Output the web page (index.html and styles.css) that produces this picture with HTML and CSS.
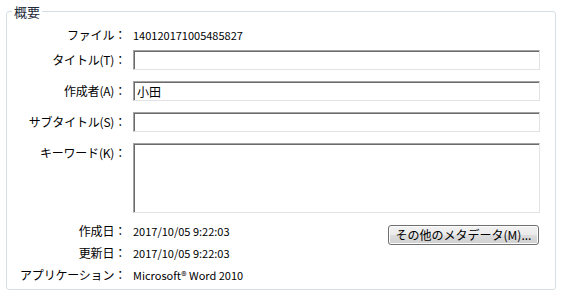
FILE: index.html
```html
<!DOCTYPE html>
<html lang="ja">
<head>
    <meta charset="UTF-8">
    <title>概要</title>
    <link rel="stylesheet" href="styles.css">
</head>
<body>
    <fieldset class="summary">
        <legend>概要</legend>

        <div class="row first">
            <span class="label">ファイル：</span>
            <span class="value">140120171005485827</span>
        </div>
        <div class="row tight">
            <label class="label" for="title">タイトル(T)：</label>
            <input type="text" id="title">
        </div>
        <div class="row">
            <label class="label" for="author">作成者(A)：</label>
            <input type="text" id="author" value="小田">
        </div>
        <div class="row">
            <label class="label" for="subtitle">サブタイトル(S)：</label>
            <input type="text" id="subtitle">
        </div>
        <div class="row top">
            <label class="label" for="keywords">キーワード(K)：</label>
            <textarea id="keywords"></textarea>
        </div>

        <!-- read-only info -->
        <div class="meta">
            <div class="row info">
                <span class="label">作成日：</span>
                <div class="value split">
                    <span>2017/10/05 9:22:03</span>
                    <button class="more">その他のメタデータ(M)...</button>
                </div>
            </div>
            <div class="row info">
                <span class="label">更新日：</span>
                <span class="value">2017/10/05 9:22:03</span>
            </div>
            <div class="row info">
                <span class="label">アプリケーション：</span>
                <span class="value">Microsoft® Word 2010</span>
            </div>
        </div>
    </fieldset>
</body>
</html>
```

FILE: styles.css
```css
* { box-sizing: border-box; }
body { margin: 0; padding-top: 3px; background: #fff; color: #000; font: 11px/20px "Noto Sans CJK JP", "Noto Sans", sans-serif; }

.summary {
    margin: 0 5px 0 6px; width: 550px; padding: 0 15px 3px 0;
    border: 1px solid #d5dfe5; border-radius: 3px;
}
.summary legend { margin-left: 5px; padding: 0 2px; font-size: 13px; line-height: 17px; color: #1e2a3a; }

.row { display: grid; grid-template-columns: 119px 1fr; column-gap: 7px; align-items: center; margin-top: 11px; }
.row.first { margin-top: 5px; }
.row.tight { margin-top: 5px; }
.row.top { align-items: start; }
.label { text-align: right; white-space: nowrap; font-size: 12px; letter-spacing: -0.2px; }

input, textarea {
    display: block; width: 100%; height: 20px; margin: 0; padding: 0 3px;
    font: 12px/17px "Noto Sans CJK JP", sans-serif; color: #000; background: #fff;
    border: 1px solid #e2e3e6; border-top-color: #a3a3a3; border-left-color: #a3a3a3;
    box-shadow: inset 1px 1px 0 #6b6b6b; outline: none; border-radius: 0;
}
textarea { height: 70px; resize: none; }

.meta { margin-top: 7px; }
.row.info { margin-top: 0; height: 22px; align-items: start; }
.row.info .label, .row.info .value { line-height: 22px; }
.split { display: flex; justify-content: space-between; align-items: flex-start; }

/* Button Styling */
.more {
    width: 151px; height: 20px; margin: 5px 1px -3px 0; padding: 0 6px;
    font: 12px/16px "Noto Sans CJK JP", sans-serif; color: #000;
    border: 1px solid #707070; border-radius: 3px;
    background: linear-gradient(#f2f2f2 0%, #ebebeb 50%, #dddddd 51%, #cfcfcf 100%);
    box-shadow: inset 0 0 0 1px #fcfcfc;
}
```
